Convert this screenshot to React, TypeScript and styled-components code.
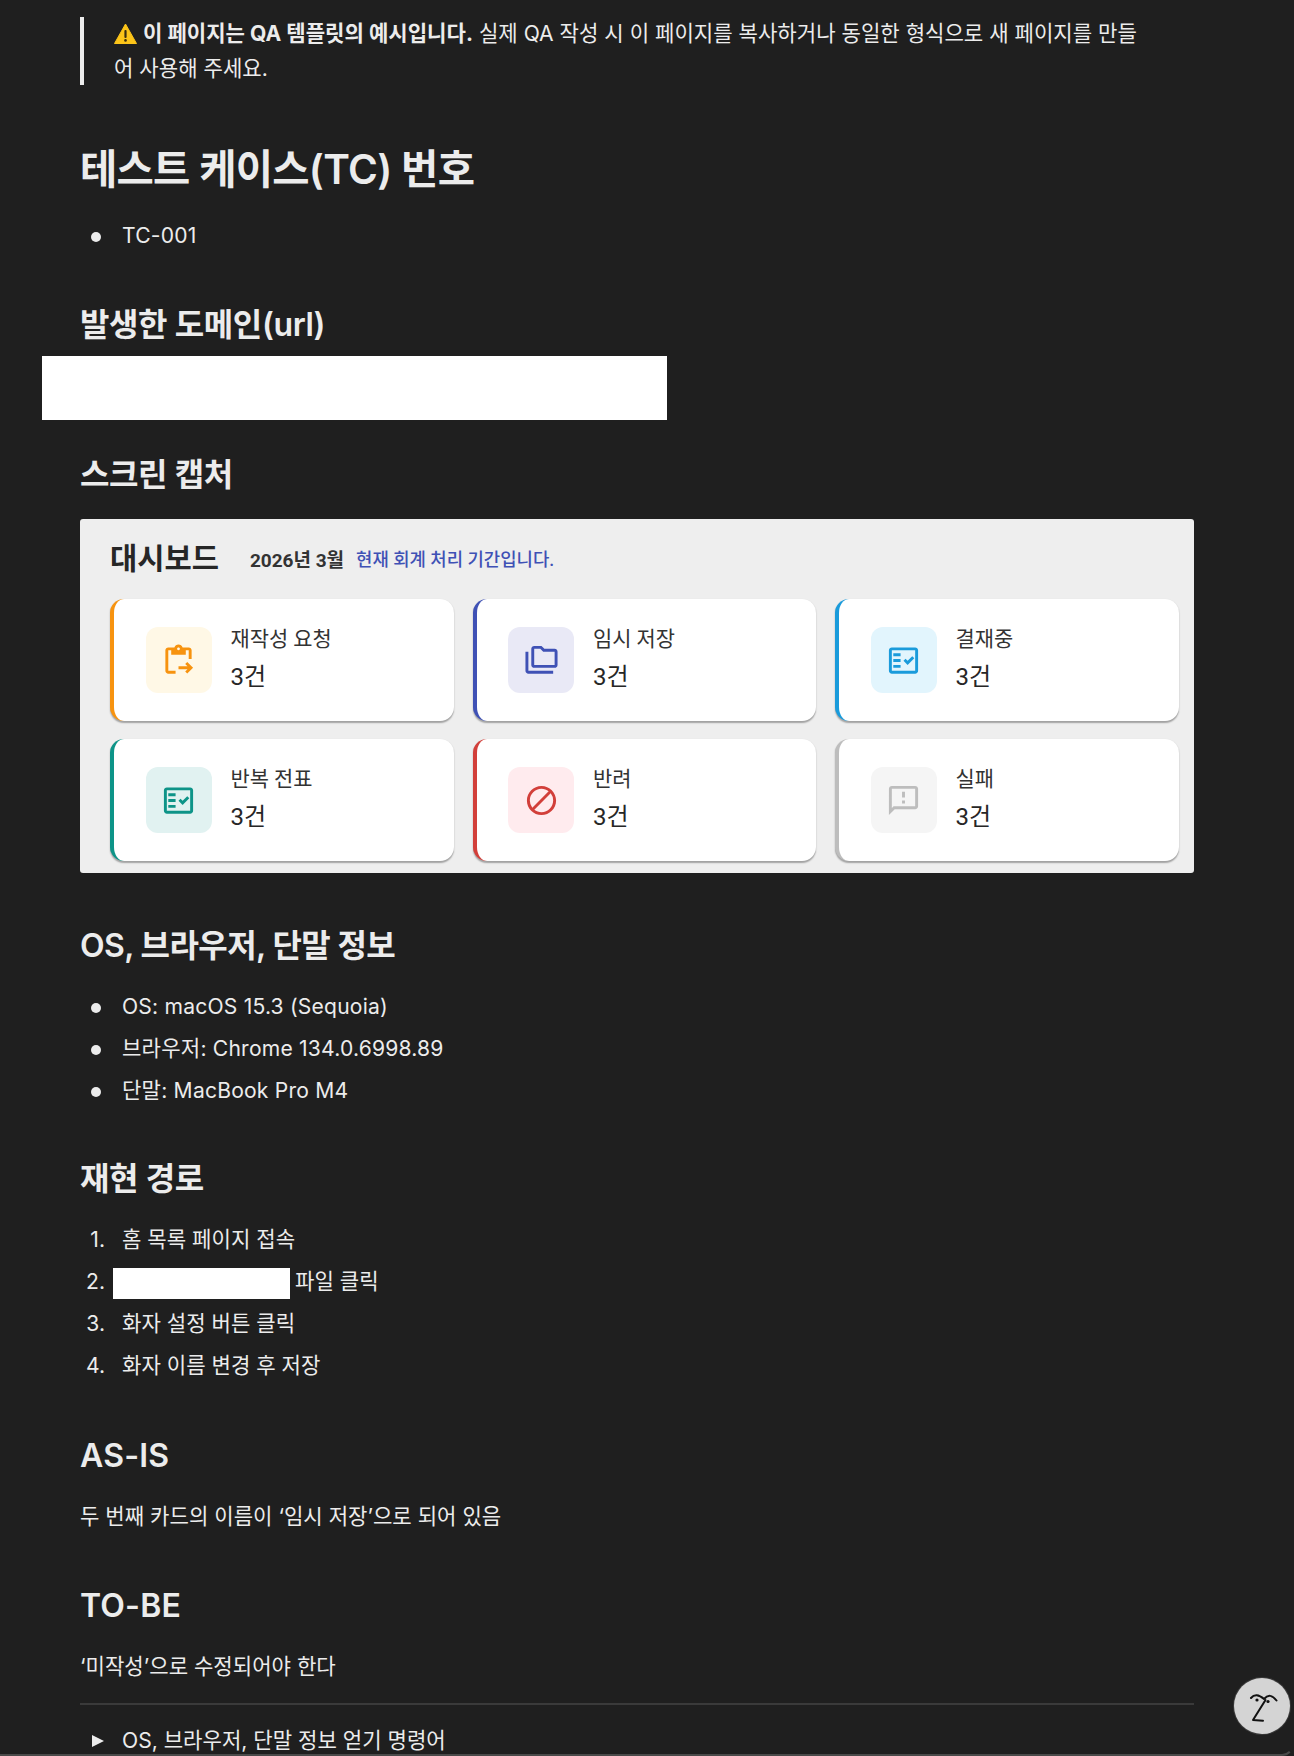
import React from "react";
import styled, { createGlobalStyle } from "styled-components";
import {
  MdOutlineContentPasteGo,
  MdOutlineFolderCopy,
  MdOutlineFactCheck,
  MdBlock,
  MdOutlineFeedback,
} from "react-icons/md";

const Global = createGlobalStyle`
  html, body { margin: 0; padding: 0; background: #1f1f1f; }
  body { width: 1294px; height: 1756px; overflow: hidden; }
`;

const Page = styled.main`
  position: relative;
  box-sizing: border-box;
  width: 1294px;
  height: 1756px;
  overflow: hidden;
  padding: 17px 100px 0 80px;
  background: #1f1f1f;
  color: #ececec;
  font-family: Inter, "Noto Sans CJK KR", sans-serif;
  font-size: 21.1px;
`;

const Quote = styled.blockquote`
  margin: 0;
  box-sizing: border-box;
  height: 68px;
  border-left: 4px solid #ececec;
  padding: 0 46px 0 30px;
  line-height: 34.5px;
  word-break: break-all;
`;

const WarnIcon = styled.svg`
  width: 23px;
  height: 21px;
  vertical-align: -3px;
  margin-right: 6px;
`;

const H1 = styled.h1`
  margin: 58px 0 0;
  font-size: 40.5px;
  line-height: 54px;
  font-weight: 600;
  letter-spacing: -0.7px;
`;

const Heading = styled.h2<{ $top: number; $ls?: number }>`
  margin: ${(p) => p.$top}px 0 0;
  font-size: 32px;
  line-height: 44px;
  font-weight: 600;
  letter-spacing: ${(p) => p.$ls ?? -0.4}px;
`;

const BulletList = styled.ul<{ $top: number }>`
  margin: ${(p) => p.$top}px 0 0;
  padding: 0 0 0 42px;
  list-style: none;
`;

const NumberList = styled.ol<{ $top: number }>`
  margin: ${(p) => p.$top}px 0 0;
  padding: 0 0 0 42px;
  list-style: none;
  counter-reset: step;
`;

const Item = styled.li`
  position: relative;
  line-height: 42px;
  height: 42px;
`;

const BulletItem = styled(Item)<{ $latin?: boolean }>`
  letter-spacing: ${(p) => (p.$latin ? "0.2px" : "0")};
  &::before {
    content: "";
    position: absolute;
    left: -31px;
    top: 16.5px;
    width: 10px;
    height: 10px;
    border-radius: 50%;
    background: #ececec;
  }
`;

const StepItem = styled(Item)`
  counter-increment: step;
  &::before {
    content: counter(step) ".";
    position: absolute;
    right: calc(100% + 17px);
  }
`;

const Redact = styled.div`
  box-sizing: border-box;
  width: 625px;
  height: 64px;
  margin: 9px 0 0 -38px;
  background: #fff;
`;

const InlineRedact = styled.span`
  display: inline-block;
  width: 177px;
  height: 31px;
  margin: 0 5px 0 -9px;
  vertical-align: middle;
  background: #fff;
`;

const Para = styled.p<{ $top: number }>`
  margin: ${(p) => p.$top}px 0 0;
  line-height: 42px;
`;

const Rule = styled.hr`
  margin: 15px 0 0;
  border: 0;
  height: 2px;
  background: #3a3a3a;
`;

const Summary = styled.div`
  display: flex;
  align-items: center;
  margin-top: 15px;
  line-height: 42px;
`;

const Caret = styled.span`
  width: 0;
  height: 0;
  margin: 0 18px 0 12px;
  border-left: 12px solid #ececec;
  border-top: 6.5px solid transparent;
  border-bottom: 6.5px solid transparent;
`;

const Panel = styled.section`
  box-sizing: border-box;
  width: 1114px;
  height: 354px;
  margin-top: 22px;
  padding: 0 16px 12px 30px;
  background: #eeeeee;
  border-radius: 3px;
  font-family: Roboto, "Noto Sans CJK KR", sans-serif;
  color: #262626;
`;

const PanelHead = styled.header`
  display: flex;
  align-items: center;
  height: 80px;
`;

const PanelTitle = styled.h3`
  margin: 0 31px 0 0;
  font-size: 29.6px;
  line-height: 46px;
  font-weight: 700;
  color: #262626;
`;

const PanelPeriod = styled.span`
  font-size: 19px;
  font-weight: 700;
  margin-right: 12px;
  color: #333;
  position: relative;
  top: -1px;
`;

const PanelNote = styled.span`
  font-size: 17.8px;
  font-weight: 500;
  color: #3f51b5;
  position: relative;
  top: -1px;
`;

const Grid = styled.div`
  display: grid;
  grid-template-columns: repeat(3, 343.5px);
  grid-auto-rows: 122px;
  column-gap: 19px;
  row-gap: 18px;
`;

const Card = styled.article<{ $c: string }>`
  box-sizing: border-box;
  display: flex;
  align-items: center;
  gap: 19px;
  padding-left: 31.5px;
  background: #fff;
  border-left: 4.5px solid ${(p) => p.$c};
  border-radius: 14px;
  box-shadow: 0 1.5px 1.5px rgba(0, 0, 0, 0.32);
`;

const IconBox = styled.div<{ $bg: string; $c: string }>`
  width: 66px;
  height: 66px;
  display: flex;
  align-items: center;
  justify-content: center;
  border-radius: 12px;
  background: ${(p) => p.$bg};
  color: ${(p) => p.$c};
  font-size: 35px;
`;

const CardText = styled.div`
  display: flex;
  flex-direction: column;
  gap: 7px;
`;

const CardLabel = styled.span`
  font-size: 20.9px;
  line-height: 27px;
  color: #333;
`;

const CardCount = styled.span`
  font-size: 24px;
  line-height: 34px;
  color: #262626;
`;

const Fab = styled.div`
  position: absolute;
  left: 1234px;
  top: 1678px;
  width: 56px;
  height: 56px;
  border-radius: 50%;
  background: #d4d4d4;
  box-shadow: 0 0 0 1px #3a3a3a;
`;

const WindowEdge = styled.div`
  position: absolute;
  left: 0;
  right: 0;
  bottom: 0;
  height: 14px;
  box-sizing: border-box;
  border-bottom: 2px solid #4a4a4a;
  border-right: 2px solid transparent;
  border-bottom-right-radius: 12px;
`;

const cards = [
  { label: "재작성 요청", c: "#f7930f", bg: "#fff8e6", Icon: MdOutlineContentPasteGo },
  { label: "임시 저장", c: "#3f51b5", bg: "#e9e9f6", Icon: MdOutlineFolderCopy },
  { label: "결재중", c: "#1a9bdb", bg: "#e2f5fd", Icon: MdOutlineFactCheck },
  { label: "반복 전표", c: "#0d9488", bg: "#e1f2f1", Icon: MdOutlineFactCheck },
  { label: "반려", c: "#d23f3a", bg: "#ffebee", Icon: MdBlock },
  { label: "실패", c: "#bdbdbd", bg: "#f5f5f5", Icon: MdOutlineFeedback },
];

export default function App() {
  return (
    <Page>
      <Global />
      <Quote>
        <strong>
          <WarnIcon viewBox="0 0 23 21" aria-hidden="true">
            <path d="M11.5 1 L22.5 20.5 L0.5 20.5 Z" fill="#fcc419" stroke="#fcc419" strokeLinejoin="round" />
            <rect x="10.4" y="7" width="2.2" height="8" rx="1" fill="#3a2e10" />
            <circle cx="11.5" cy="17.4" r="1.3" fill="#3a2e10" />
          </WarnIcon>
          이 페이지는 QA 템플릿의 예시입니다.
        </strong>{" "}
        실제 QA 작성 시 이 페이지를 복사하거나 동일한 형식으로 새 페이지를 만들어 사용해 주세요.
      </Quote>
      <H1>테스트 케이스(TC) 번호</H1>
      <BulletList $top={18}>
        <BulletItem $latin>TC-001</BulletItem>
      </BulletList>
      <Heading $top={46}>발생한 도메인(url)</Heading>
      <Redact />
      <Heading $top={33}>스크린 캡처</Heading>
      <Panel>
        <PanelHead>
          <PanelTitle>대시보드</PanelTitle>
          <PanelPeriod>2026년 3월</PanelPeriod>
          <PanelNote>현재 회계 처리 기간입니다.</PanelNote>
        </PanelHead>
        <Grid>
          {cards.map(({ label, c, bg, Icon }) => (
            <Card key={label} $c={c}>
              <IconBox $bg={bg} $c={c}>
                <Icon />
              </IconBox>
              <CardText>
                <CardLabel>{label}</CardLabel>
                <CardCount>3건</CardCount>
              </CardText>
            </Card>
          ))}
        </Grid>
      </Panel>
      <Heading $top={51} $ls={-0.6}>OS, 브라우저, 단말 정보</Heading>
      <BulletList $top={18}>
        <BulletItem $latin>OS: macOS 15.3 (Sequoia)</BulletItem>
        <BulletItem $latin>브라우저: Chrome 134.0.6998.89</BulletItem>
        <BulletItem $latin>단말: MacBook Pro M4</BulletItem>
      </BulletList>
      <Heading $top={45}>재현 경로</Heading>
      <NumberList $top={18}>
        <StepItem>홈 목록 페이지 접속</StepItem>
        <StepItem>
          <InlineRedact />
          파일 클릭
        </StepItem>
        <StepItem>화자 설정 버튼 클릭</StepItem>
        <StepItem>화자 이름 변경 후 저장</StepItem>
      </NumberList>
      <Heading $top={47} $ls={0.2}>AS-IS</Heading>
      <Para $top={18}>두 번째 카드의 이름이 ‘임시 저장’으로 되어 있음</Para>
      <Heading $top={46} $ls={0.2}>TO-BE</Heading>
      <Para $top={18}>‘미작성’으로 수정되어야 한다</Para>
      <Rule />
      <Summary>
        <Caret />
        OS, 브라우저, 단말 정보 얻기 명령어
      </Summary>
      <Fab>
        <svg width="56" height="56" viewBox="0 0 56 56" fill="none" stroke="#111" strokeWidth="2" strokeLinecap="round" strokeLinejoin="round" aria-hidden="true">
          <path d="M17 20 Q22 14 30 21 Q36 14 42.5 22.5" />
          <path d="M31.5 22 L19 42 L29 42.7" />
          <circle cx="23" cy="22" r="1.6" fill="#111" stroke="none" />
          <circle cx="34" cy="23.5" r="1.6" fill="#111" stroke="none" />
        </svg>
      </Fab>
      <WindowEdge />
    </Page>
  );
}
